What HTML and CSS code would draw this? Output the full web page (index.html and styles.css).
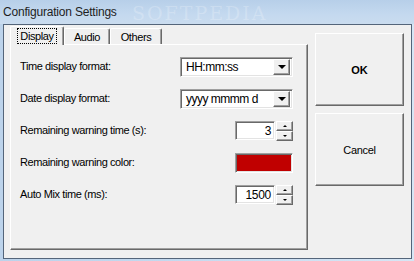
FILE: index.html
```html
<!DOCTYPE html>
<html lang="en">
<head>
  <meta charset="UTF-8">
  <title>Configuration Settings</title>
  <link rel="stylesheet" href="styles.css">
</head>
<body>
  <div class="window">
    <div class="titlebar">
      <span class="title">Configuration Settings</span>
      <span class="watermark">SOFTPEDIA</span>
    </div>

    <div class="client">
      <div class="tabctl">
        <div class="tabs">
          <div class="tab selected"><span class="focus">Display</span></div>
          <div class="tab">Audio</div>
          <div class="tab">Others</div>
        </div>

        <div class="panel">
          <div class="row">
            <span class="label">Time display format:</span>
            <div class="combo">
              <span class="value">HH:mm:ss</span>
              <span class="drop"><i class="arrow"></i></span>
            </div>
          </div>
          <div class="row">
            <span class="label">Date display format:</span>
            <div class="combo">
              <span class="value">yyyy mmmm d</span>
              <span class="drop"><i class="arrow"></i></span>
            </div>
          </div>
          <div class="row">
            <span class="label">Remaining warning time (s):</span>
            <div class="spin">
              <span class="edit">3</span>
              <span class="updown">
                <span class="sbtn"><i class="tri up"></i></span>
                <span class="sbtn"><i class="tri down"></i></span>
              </span>
            </div>
          </div>
          <div class="row">
            <span class="label">Remaining warning color:</span>
            <div class="swatch"></div>
          </div>
          <div class="row">
            <span class="label">Auto Mix time (ms):</span>
            <div class="spin">
              <span class="edit">1500</span>
              <span class="updown">
                <span class="sbtn"><i class="tri up"></i></span>
                <span class="sbtn"><i class="tri down"></i></span>
              </span>
            </div>
          </div>
        </div>
      </div>

      <div class="buttons">
        <button class="btn ok">OK</button>
        <button class="btn">Cancel</button>
      </div>
    </div>
  </div>
</body>
</html>
```

FILE: styles.css
```css
body {
  margin: 0;
  width: 414px;
  height: 261px;
  overflow: hidden;
  font-family: "Liberation Sans", Arial, sans-serif;
  background: linear-gradient(90deg, #bcd3eb 0%, #c3d9ef 40%, #cfe1f3 75%, #d6e6f5 100%);
}

.window {
  display: flex;
  flex-direction: column;
  height: 261px;
}

/* title bar */
.titlebar {
  position: relative;
  height: 24px;
  display: flex;
  align-items: center;
  padding-left: 3px;
  background: linear-gradient(180deg, #b7cfe9 0%, #c4d9ef 60%, #cadcef 100%);
}

.title {
  font-size: 12px;
  letter-spacing: -0.2px;
  color: #1e1e1e;
  position: relative;
  z-index: 1;
}

.watermark {
  position: absolute;
  left: 132px;
  top: 3px;
  font-size: 19px;
  line-height: 20px;
  font-family: "DejaVu Serif", serif;
  letter-spacing: 2px;
  color: rgba(255, 255, 255, 0.22);
}

/* client area */
.client {
  margin: 0 2px 2px 3px;
  height: 233px;
  display: flex;
  border: 1px solid #54657a;
  background: #f0f0f0;
  font-size: 11px;
  letter-spacing: -0.4px;
  color: #000;
}

.tabctl {
  margin-left: 6px;
  width: 298px;
  display: flex;
  flex-direction: column;
}

.tabs {
  display: flex;
  align-items: flex-end;
  height: 19px;
  position: relative;
  z-index: 1;
}

.tab {
  width: 46px;
  height: 16px;
  display: flex;
  align-items: center;
  justify-content: center;
  box-sizing: border-box;
  border-top: 1px solid #fff;
  border-left: 1px solid #fff;
  border-right: 1px solid #696969;
  box-shadow: inset -1px 0 0 #a0a0a0;
  border-radius: 2px 2px 0 0;
}

.tab:last-child {
  width: 52px;
}

.tab.selected {
  width: 54px;
  height: 19px;
  margin-bottom: -1px;
  background: #f0f0f0;
  padding-bottom: 1px;
}

.focus {
  outline: 1px dotted #000;
  outline-offset: 1px;
  padding: 0 1px;
}

.panel {
  height: 206px;
  box-sizing: border-box;
  border-top: 1px solid #fff;
  border-left: 1px solid #fff;
  border-right: 1px solid #696969;
  border-bottom: 1px solid #696969;
  box-shadow: inset -1px -1px 0 #a0a0a0;
  padding: 12px 14px 0 9px;
  display: flex;
  flex-direction: column;
  gap: 12px;
}

.row {
  height: 20px;
  display: flex;
  align-items: center;
  justify-content: space-between;
}

.label {
  margin-top: -3px;
}

/* sunken fields */
.combo,
.edit,
.swatch {
  box-sizing: border-box;
  border-top: 1px solid #a0a0a0;
  border-left: 1px solid #a0a0a0;
  border-right: 1px solid #fff;
  border-bottom: 1px solid #fff;
  box-shadow: inset 1px 1px 0 #696969, inset -1px -1px 0 #e3e3e3;
}

.combo {
  width: 113px;
  height: 20px;
  background: #fff;
  display: flex;
  align-items: center;
  justify-content: space-between;
  padding: 2px 2px 2px 5px;
}

.value {
  font-size: 12px;
  letter-spacing: -0.5px;
}

.drop,
.sbtn {
  display: flex;
  align-items: center;
  justify-content: center;
  box-sizing: border-box;
  background: #f0f0f0;
  border-top: 1px solid #fff;
  border-left: 1px solid #fff;
  border-right: 1px solid #696969;
  border-bottom: 1px solid #696969;
  box-shadow: inset -1px -1px 0 #a0a0a0;
}

.drop {
  width: 17px;
  height: 16px;
}

.arrow {
  width: 0;
  height: 0;
  border-left: 4px solid transparent;
  border-right: 4px solid transparent;
  border-top: 4px solid #000;
}

.spin {
  display: flex;
  gap: 1px;
  width: 58px;
}

.edit {
  width: 40px;
  height: 19px;
  background: #fff;
  text-align: right;
  padding: 2px 3px 0 0;
  font-size: 12px;
  letter-spacing: -0.3px;
}

.updown {
  display: flex;
  flex-direction: column;
}

.sbtn {
  width: 17px;
  height: 10px;
}

.tri {
  width: 0;
  height: 0;
  border-left: 2px solid transparent;
  border-right: 2px solid transparent;
}

.tri.up {
  border-bottom: 2px solid #000;
}

.tri.down {
  border-top: 2px solid #000;
}

.swatch {
  width: 58px;
  height: 20px;
  background: #c00000;
}

/* buttons */
.buttons {
  margin-left: 7px;
  padding-top: 8px;
  display: flex;
  flex-direction: column;
  gap: 7px;
}

.btn {
  width: 89px;
  height: 73px;
  margin: 0;
  padding: 0;
  background: #f0f0f0;
  font-family: "Liberation Sans", Arial, sans-serif;
  font-size: 11px;
  letter-spacing: -0.3px;
  color: #000;
  border-top: 1px solid #fff;
  border-left: 1px solid #fff;
  border-right: 1px solid #696969;
  border-bottom: 1px solid #696969;
  box-shadow: inset -1px -1px 0 #a0a0a0;
}

.btn.ok {
  font-weight: bold;
  letter-spacing: 0;
}
```
